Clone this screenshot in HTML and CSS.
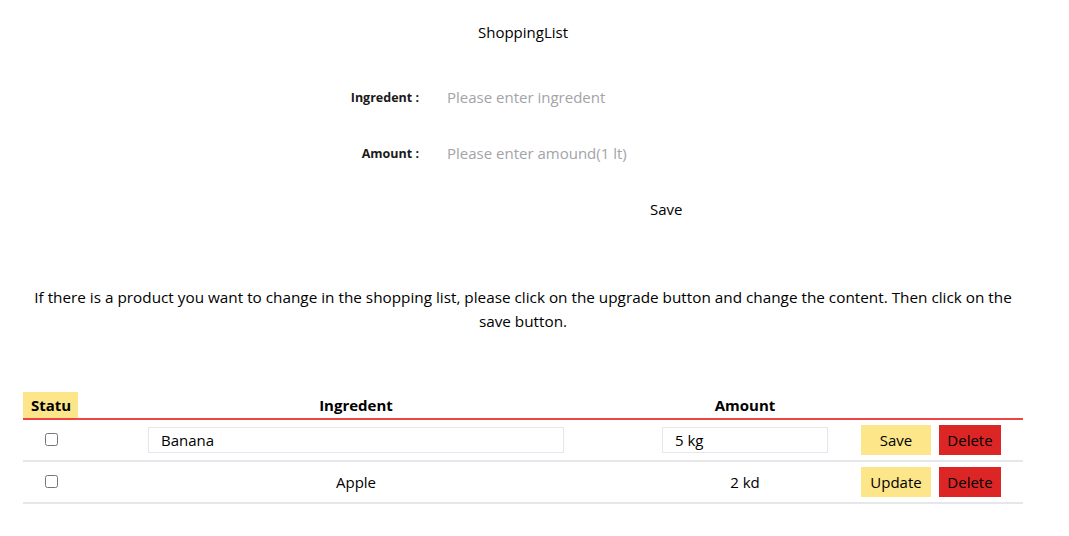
FILE: index.html
```html
<!DOCTYPE html>
<html lang="en">
<head>
<meta charset="utf-8">
<title>ShoppingList</title>
<link rel="stylesheet" href="styles.css">
</head>
<body>
<div class="page">
  <h1 class="title">ShoppingList</h1>
  <form class="form">
    <div class="form-row">
      <label class="label">Ingredent :</label>
      <input class="field" type="text" placeholder="Please enter ingredent">
    </div>
    <div class="form-row">
      <label class="label">Amount :</label>
      <input class="field" type="text" placeholder="Please enter amound(1 lt)">
    </div>
    <div class="form-actions">
      <button type="button" class="plain-btn">Save</button>
    </div>
  </form>
  <p class="info">If there is a product you want to change in the shopping list, please click on the upgrade button and change the content. Then click on the save button.</p>
  <table class="list">
    <thead>
      <tr>
        <th class="col-status"><span class="status-head">Statu</span></th>
        <th class="col-ing">Ingredent</th>
        <th class="col-amt">Amount</th>
        <th class="col-act"></th>
      </tr>
    </thead>
    <tbody>
      <tr>
        <td class="c-status"><input type="checkbox" class="check"></td>
        <td class="c-ing"><input class="cell-input ing-input" type="text" value="Banana"></td>
        <td class="c-amt"><input class="cell-input amt-input" type="text" value="5 kg"></td>
        <td class="c-act"><div class="actions"><button class="btn yellow">Save</button><button class="btn red">Delete</button></div></td>
      </tr>
      <tr>
        <td class="c-status"><input type="checkbox" class="check"></td>
        <td class="c-ing">Apple</td>
        <td class="c-amt">2 kd</td>
        <td class="c-act"><div class="actions"><button class="btn yellow">Update</button><button class="btn red">Delete</button></div></td>
      </tr>
    </tbody>
  </table>
</div>
</body>
</html>
```

FILE: styles.css
```css
* { box-sizing: border-box; }
html, body { margin: 0; padding: 0; background: #fff; }
body {
  font-family: "Open Sans", "Noto Sans", "Liberation Sans", sans-serif;
  font-size: 15px;
  color: #000;
}
.page {
  width: 1046px;
  padding-top: 20px;
}
.title {
  margin: 0;
  font-size: 15px;
  font-weight: 400;
  text-align: center;
  line-height: 24px;
}
.form {
  margin-top: 41px;
  display: flex;
  flex-direction: column;
  gap: 32px;
}
.form-row {
  display: flex;
  align-items: center;
  height: 24px;
}
.label {
  width: 419px;
  text-align: right;
  font-size: 12.5px;
  font-weight: 700;
  color: #1a1a1a;
}
.field {
  margin-left: 28px;
  border: none;
  outline: none;
  font: inherit;
  font-size: 15px;
  padding: 0;
  width: 260px;
  color: #000;
  background: transparent;
}
.field::placeholder { color: #a3a3a8; }
.form-actions {
  height: 24px;
  display: flex;
  align-items: center;
  padding-left: 650px;
}
.plain-btn {
  border: none;
  background: none;
  font: inherit;
  font-size: 15px;
  padding: 0;
  color: #000;
}
.info {
  margin: 64px 30px 0;
  text-align: center;
  line-height: 24px;
  font-size: 15.3px;
}
.list {
  margin: 59px auto 0 23px;
  width: 1000px;
  border-collapse: collapse;
}
.list th {
  font-weight: 700;
  font-size: 15px;
  height: 26px;
  padding: 0;
  border-bottom: 2px solid #ef4444;
  vertical-align: middle;
}
.col-status { width: 55px; text-align: left; }
.status-head {
  display: block;
  background: #fde68a;
  height: 26px;
  line-height: 26px;
  padding-left: 8px;
}
.col-ing { width: 556px; }
.col-amt { width: 222px; }
.col-act { width: 167px; }
.list td {
  height: 42px;
  padding: 0;
  border-bottom: 2px solid #e5e7eb;
  text-align: center;
  vertical-align: middle;
}
.check {
  width: 13px;
  height: 13px;
  margin: 0 0 0 2px;
}
.cell-input {
  border: 1px solid #e5e7eb;
  font: inherit;
  font-size: 15px;
  height: 26px;
  padding: 0 12px;
  outline: none;
  color: #000;
  vertical-align: middle;
}
.ing-input { width: 416px; }
.amt-input { width: 166px; }
.actions {
  display: flex;
  gap: 8px;
  padding-left: 5px;
}
.btn {
  border: none;
  font: inherit;
  font-size: 15px;
  height: 30px;
  padding: 0;
  color: #000;
}
.yellow { background: #fde68a; width: 70px; }
.red { background: #dc2626; width: 62px; }
```
